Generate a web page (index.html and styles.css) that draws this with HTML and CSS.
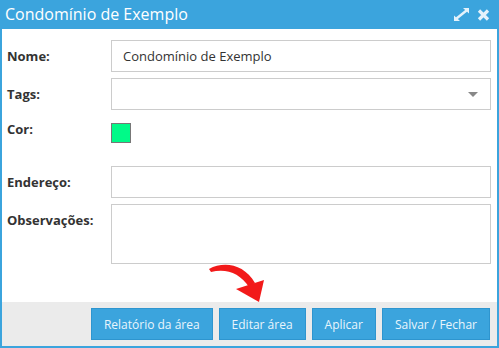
FILE: index.html
```html
<!DOCTYPE html>
<html lang="pt">
<head>
    <meta charset="UTF-8">
    <title>Condomínio de Exemplo</title>
    <link rel="stylesheet" href="styles.css">
</head>
<body>
    <div class="dialog">
        <div class="titlebar">
            <span class="title">Condomínio de Exemplo</span>
            <div class="title-icons">
                <svg class="icon" width="17" height="15" viewBox="0 0 17 15">
                    <path d="M3.5 11.5 L13.5 3.5" stroke="#e4f2fb" stroke-width="2.4" />
                    <polygon points="10,1 16,1 16,6.5" fill="#e4f2fb" />
                    <polygon points="1,8.5 1,14 7,14" fill="#e4f2fb" />
                </svg>
                <svg class="icon" width="13" height="12" viewBox="0 0 13 12">
                    <path d="M2 1.5 L11 10.5 M11 1.5 L2 10.5" stroke="#e4f2fb" stroke-width="3.2" />
                </svg>
            </div>
        </div>

        <div class="content">
            <div class="row">
                <label class="label">Nome:</label>
                <div class="field">Condomínio de Exemplo</div>
            </div>
            <div class="row">
                <label class="label">Tags:</label>
                <div class="field select"><span class="caret"></span></div>
            </div>
            <div class="row row-color">
                <label class="label">Cor:</label>
                <div class="swatch"></div>
            </div>
            <div class="row">
                <label class="label">Endereço:</label>
                <div class="field"></div>
            </div>
            <div class="row">
                <label class="label">Observações:</label>
                <div class="field textarea"></div>
            </div>

            <!-- seta de destaque -->
            <svg class="pointer" width="70" height="48" viewBox="0 0 70 48">
                <path d="M9 11 C 24 3, 44 6, 55 25 L 49 29 C 40 15, 26 10, 11 14 Z" fill="#f21a1a" />
                <polygon points="36,31 64,22 59,44" fill="#f21a1a" />
            </svg>
        </div>

        <div class="footer">
            <button class="btn">Relatório da área</button>
            <button class="btn">Editar área</button>
            <button class="btn">Aplicar</button>
            <button class="btn">Salvar / Fechar</button>
        </div>
    </div>
</body>
</html>
```

FILE: styles.css
```css
body {
    margin: 0;
    font-family: "Open Sans", Arial, sans-serif;
    background-color: #3ba4dd;
    color: #333;
}

.dialog {
    width: 499px;
    height: 348px;
    box-sizing: border-box;
    background-color: #3ba4dd;
    padding: 0 2px 2px 2px;
    display: flex;
    flex-direction: column;
}

.titlebar {
    height: 29px;
    display: flex;
    align-items: center;
    justify-content: space-between;
    padding: 0 7px 0 3px;
}

.title {
    color: #ffffff;
    font-size: 16px;
    line-height: 29px;
}

.title-icons {
    display: flex;
    align-items: center;
    gap: 7px;
}

.icon {
    display: block;
}

.content {
    position: relative;
    flex: 1;
    background-color: #ffffff;
    padding: 11px 5px 0 5px;
    display: flex;
    flex-direction: column;
    gap: 6px;
}

.row {
    display: grid;
    grid-template-columns: 104px 380px;
    align-items: start;
}

.label {
    font-size: 13px;
    font-weight: bold;
    line-height: 18px;
    padding-top: 7px;
}

.field {
    height: 32px;
    box-sizing: border-box;
    border: 1px solid #cccccc;
    padding: 0 11px;
    font-size: 13px;
    line-height: 30px;
    color: #333;
    position: relative;
}

.select .caret {
    position: absolute;
    right: 12px;
    top: 13px;
    border-left: 5px solid transparent;
    border-right: 5px solid transparent;
    border-top: 5px solid #888888;
}

.textarea {
    height: 60px;
}

.row-color {
    height: 44px;
}

.row-color .label {
    padding-top: 4px;
}

.swatch {
    width: 20px;
    height: 20px;
    box-sizing: border-box;
    margin-top: 7px;
    background-color: #00fa88;
    border: 1px solid #777777;
}

.pointer {
    position: absolute;
    left: 198px;
    top: 229px;
}

.footer {
    height: 44px;
    background-color: #ebebeb;
    display: flex;
    justify-content: flex-end;
    align-items: center;
    gap: 6px;
    padding: 0 7px;
}

.btn {
    height: 32px;
    padding: 0 12px;
    background-color: #3ba4dd;
    border: 1px solid #2e95cf;
    color: #e9f5fc;
    font-family: "Open Sans", Arial, sans-serif;
    font-size: 12px;
}
```
